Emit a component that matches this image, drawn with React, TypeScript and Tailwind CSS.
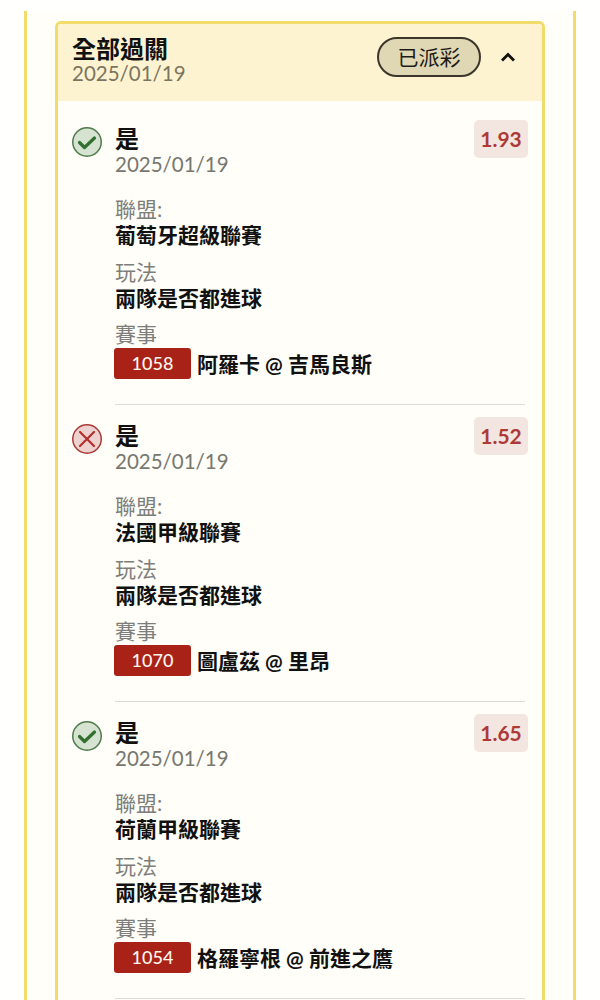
import React from 'react';

const FONT = "font-['Lato','Noto_Sans_CJK_TC',sans-serif]";

const legs = [
  { won: true, odds: '1.93', league: '葡萄牙超級聯賽', code: '1058', match: '阿羅卡 @ 吉馬良斯' },
  { won: false, odds: '1.52', league: '法國甲級聯賽', code: '1070', match: '圖盧茲 @ 里昂' },
  { won: true, odds: '1.65', league: '荷蘭甲級聯賽', code: '1054', match: '格羅寧根 @ 前進之鷹' },
];

const StatusIcon = ({ won }: { won: boolean }) =>
  won ? (
    <svg width="32" height="32" viewBox="0 0 32 32" className="shrink-0">
      <circle cx="16" cy="16" r="14.25" fill="#d5e3d0" stroke="#4f7a4c" strokeWidth="1.5" />
      <path d="M8.5 16.5l5 5L23.5 12" fill="none" stroke="#33702f" strokeWidth="3.2" strokeLinecap="round" strokeLinejoin="round" />
    </svg>
  ) : (
    <svg width="32" height="32" viewBox="0 0 32 32" className="shrink-0">
      <circle cx="16" cy="16" r="14.25" fill="#eed2d0" stroke="#ab3a36" strokeWidth="1.5" />
      <path d="M9 9l14 14M23 9L9 23" fill="none" stroke="#b3302c" strokeWidth="2.2" strokeLinecap="round" />
    </svg>
  );

const Field = ({ label, value }: { label: string; value: string }) => (
  <div className="h-[63px]">
    <div className="text-[21px] leading-[26px] text-[#7d7d7a]">{label}</div>
    <div className="text-[21px] leading-[26px] font-bold text-[#111]">{value}</div>
  </div>
);

const Leg = ({ leg }: { leg: (typeof legs)[number] }) => (
  <div className="mb-[12px] flex h-[285px]">
    <div className="-ml-[1px] w-[44px] pt-[6px]">
      <StatusIcon won={leg.won} />
    </div>
    <div className="flex-1 border-b border-[#deddd6]">
      <div className="flex justify-between">
        <div>
          <div className="pt-[6px] text-[24px] leading-[26px] font-bold text-[#111]">是</div>
          <div className="text-[20.5px] leading-[24px] text-[#77776f]">2025/01/19</div>
        </div>
        <div className="-mr-[3px] h-[38px] w-[54px] rounded-[5px] bg-[#f3e6e0] text-center text-[21px] leading-[38px] font-bold text-[#ad3a36]">
          {leg.odds}
        </div>
      </div>
      <div className="mt-[20px]">
        <Field label="聯盟:" value={leg.league} />
        <Field label="玩法" value="兩隊是否都進球" />
        <div className="-mt-[1px] text-[21px] leading-[26px] text-[#7d7d7a]">賽事</div>
        <div className="mt-[1px] flex items-center gap-[6px]">
          <span className="-ml-[1px] h-[31px] w-[77px] rounded-[3px] bg-[#a92218] text-center text-[18px] leading-[31px] font-medium text-[#fdf6ee]">
            {leg.code}
          </span>
          <span className="-mt-[1px] text-[21px] leading-[31px] font-bold text-[#111]">{leg.match}</span>
        </div>
      </div>
    </div>
  </div>
);

export default function App() {
  return (
    <div className={`${FONT} h-[1000px] overflow-hidden bg-[#fffffd] pt-[11px]`}>
      <div className="mx-[24px] h-[1100px] border-x-[3px] border-[#f2dc69] bg-[#fffef8] px-[28px] pt-[10px]">
        <div className="h-[1080px] rounded-t-[6px] border-x-[3px] border-t-[3px] border-[#f2dc69] bg-[#fffef8]">
          <div className="flex h-[77px] items-center justify-between rounded-t-[3px] bg-[#fdf3d0] pr-[26px] pl-[14px]">
            <div className="-mt-[7px]">
              <div className="text-[24px] leading-[27px] font-bold text-[#111]">全部過關</div>
              <div className="text-[20.5px] leading-[22px] text-[#7b7560]">2025/01/19</div>
            </div>
            <div className="-mt-[12px] flex items-center gap-[19px]">
              <span className="h-[40px] w-[104px] rounded-full border-2 border-[#3b362a] bg-[#e0d8b5] text-center text-[21px] leading-[36px] text-[#1d1b16]">
                已派彩
              </span>
              <svg width="16" height="12" viewBox="0 0 16 12">
                <path d="M2 9.5L8 3.5l6 6" fill="none" stroke="#111" strokeWidth="2.8" />
              </svg>
            </div>
          </div>
          <div className="pt-[19px] pr-[17px] pl-[14px]">
            {legs.map((leg) => (
              <Leg key={leg.code} leg={leg} />
            ))}
          </div>
        </div>
      </div>
    </div>
  );
}
